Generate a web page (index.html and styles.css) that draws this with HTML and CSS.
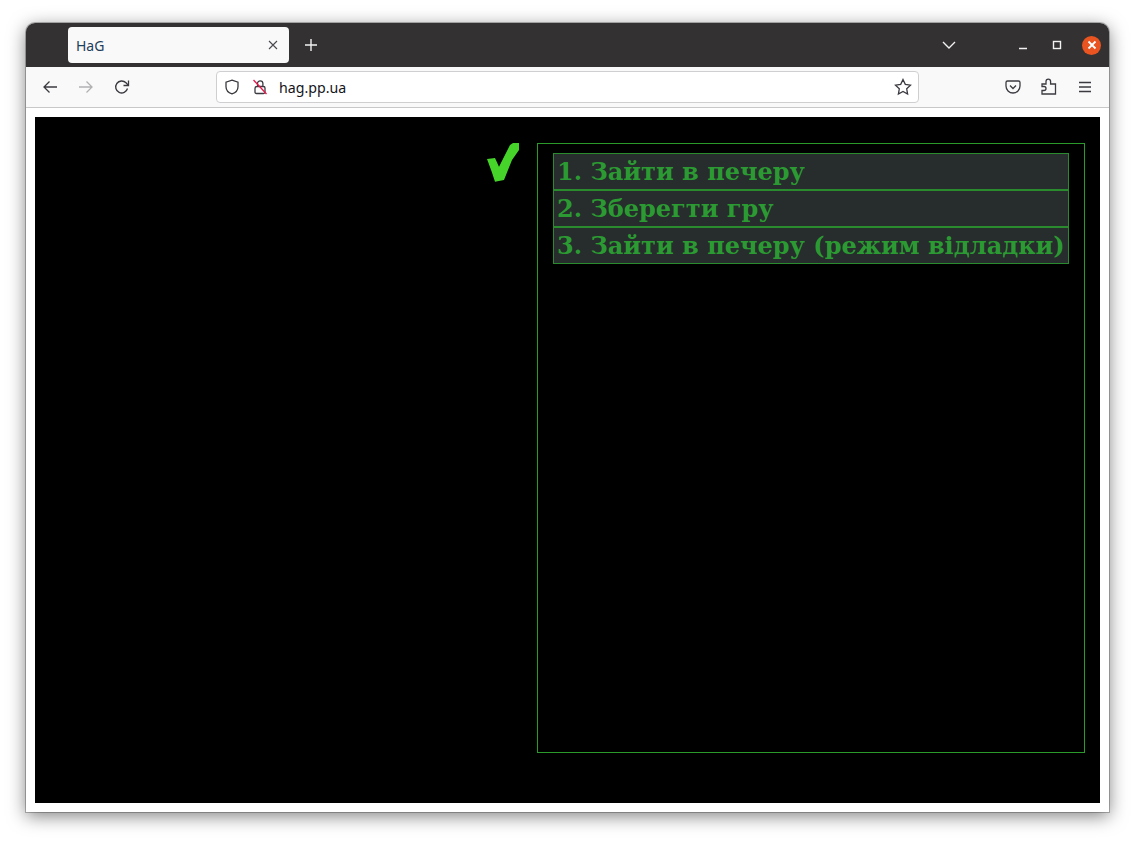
FILE: index.html
```html
<!DOCTYPE html>
<html lang="uk">
<head>
    <meta charset="UTF-8">
    <meta name="viewport" content="width=device-width, initial-scale=1.0">
    <title>HaG</title>
    <link rel="stylesheet" href="styles.css">
</head>
<body>
    <div class="window">
        <div class="titlebar">
            <div class="tab">
                <span class="tab-title">HaG</span>
                <svg class="tab-close" width="10" height="10" viewBox="0 0 10 10"><path d="M1 1l8 8M9 1l-8 8"/></svg>
            </div>
            <svg class="new-tab" width="14" height="14" viewBox="0 0 14 14"><path d="M7 1v12M1 7h12"/></svg>
            <svg class="tab-list" width="14" height="8" viewBox="0 0 14 8"><path d="M1 1l6 6 6-6"/></svg>
            <svg class="win-min" width="10" height="10" viewBox="0 0 10 10"><path d="M1 8.500h8"/></svg>
            <svg class="win-max" width="10" height="10" viewBox="0 0 10 10"><rect x="1.500" y="1.500" width="7" height="7"/></svg>
            <div class="win-close">
                <svg width="10" height="10" viewBox="0 0 10 10"><path d="M1.500 1.500l7 7M8.500 1.500l-7 7"/></svg>
            </div>
        </div>
        <div class="toolbar">
            <svg class="tool tool-back" width="16" height="16" viewBox="0 0 16 16"><path d="M15 8H2M7.500 2.500L2 8l5.500 5.500"/></svg>
            <svg class="tool tool-forward" width="16" height="16" viewBox="0 0 16 16"><path d="M1 8h13M8.500 2.500L14 8l-5.500 5.500"/></svg>
            <svg class="tool tool-reload" width="16" height="16" viewBox="0 0 16 16"><path d="M13.500 9.500A6 6 0 1 1 12 3.800L14 6"/><path d="M14.500 1.500V6.500H9.500"/></svg>
            <div class="urlbar">
                <svg class="shield" width="16" height="16" viewBox="0 0 16 16"><path d="M8 1.200l6 2v4.500c0 3.500-2.500 6-6 7.200-3.500-1.200-6-3.700-6-7.200V3.200z"/></svg>
                <svg class="lock" width="16" height="16" viewBox="0 0 16 16"><path class="lock-body" d="M5.500 7.500V4.500a2.700 2.700 0 0 1 5.400 0v3M3 9.500q0-2 2-2h6.500q1.500 0 1.500 1.500v4q0 1.500-1.500 1.500h-7q-1.500 0-1.500-1.500z"/><path class="lock-slash" d="M1.500 1l13 14"/></svg>
                <span class="url">hag.pp.ua</span>
                <svg class="star" width="18" height="18" viewBox="0 0 18 18"><path d="M9 1.500l2.300 4.900 5.200.7-3.800 3.700.9 5.300L9 13.500l-4.600 2.600.9-5.300L1.500 7.100l5.200-.7z"/></svg>
            </div>
            <svg class="tool tool-pocket" width="16" height="16" viewBox="0 0 16 16"><path d="M2.500 2h11A1.500 1.500 0 0 1 15 3.500V7a7 7 0 0 1-14 0V3.500A1.500 1.500 0 0 1 2.500 2z"/><path d="M5 6.500l3 3 3-3"/></svg>
            <svg class="tool tool-ext" width="16" height="18" viewBox="0 0 16 18"><path d="M1 6.500h4V4a2.300 2.300 0 0 1 4.600 0v2.500h4.900v10H1v-3.500h2a2 2 0 0 0 0-4H1z" transform="translate(0 -0.500)"/></svg>
            <svg class="tool tool-menu" width="16" height="16" viewBox="0 0 16 16"><path d="M2 3.500h12M2 8h12M2 12.500h12"/></svg>
        </div>
        <div class="content">
            <div class="stage">
                <svg class="check" width="33" height="41" viewBox="0 0 33 41"><path d="M0 17l8-1 4 8.700L23 3l3-2h6v7L25 18l-8 20-9 1.700-3.300-10z"/></svg>
                <div class="panel">
                    <div class="choice">1. Зайти в печеру</div>
                    <div class="choice">2. Зберегти гру</div>
                    <div class="choice">3. Зайти в печеру (режим відладки)</div>
                </div>
            </div>
        </div>
    </div>
</body>
</html>
```

FILE: styles.css
```css
html, body {
    height: 100%;
}
body {
    margin: 0;
    padding: 23px 26px 29px;
    box-sizing: border-box;
    background-color: #fff;
    font-family: 'Noto Sans', 'Open Sans', sans-serif;
    overflow: hidden;
}
svg {
    display: block;
    flex: none;
    fill: none;
}
.window {
    height: 789px;
    display: flex;
    flex-direction: column;
    border-radius: 9px 9px 0 0;
    overflow: hidden;
    box-shadow: 0 0 0 1px rgba(0, 0, 0, 0.25), 0 4px 18px rgba(0, 0, 0, 0.5);
}
.titlebar {
    height: 44px;
    flex: none;
    display: flex;
    align-items: center;
    box-sizing: border-box;
    padding-left: 42px;
    background-color: #333132;
}
.titlebar path, .titlebar rect {
    stroke: #f2f2f2;
    stroke-width: 1.4;
}
.tab {
    width: 221px;
    height: 36px;
    box-sizing: border-box;
    padding: 0 11px 0 8px;
    display: flex;
    align-items: center;
    justify-content: space-between;
    background-color: #f9f9f9;
    border-radius: 4px;
}
.tab-title {
    font-size: 14px;
    color: #1f3d5c;
}
.titlebar .tab-close path {
    stroke: #4a494e;
    stroke-width: 1.1;
}
.new-tab {
    margin-left: 15px;
}
.tab-list {
    margin-left: 624px;
}
.win-min {
    margin-left: 62px;
}
.win-max {
    margin-left: 24px;
}
.win-close {
    width: 19px;
    height: 19px;
    margin-left: 20px;
    border-radius: 50%;
    background-color: #e95420;
    display: flex;
    align-items: center;
    justify-content: center;
}
.titlebar .win-close path {
    stroke: #fff;
    stroke-width: 1.8;
}
.toolbar {
    height: 41px;
    flex: none;
    display: flex;
    align-items: center;
    box-sizing: border-box;
    padding: 0 0 1px 16px;
    background-color: #f9f9f9;
    border-bottom: 1px solid #c8c8c8;
}
.toolbar path {
    stroke: #3b3a40;
    stroke-width: 1.3;
}
.toolbar .tool-forward path {
    stroke: #b1b1b4;
}
.tool-forward {
    margin-left: 20px;
}
.tool-reload {
    margin-left: 20px;
}
.urlbar {
    width: 703px;
    height: 32px;
    margin-left: 86px;
    box-sizing: border-box;
    padding: 0 6px 0 7px;
    display: flex;
    align-items: center;
    background-color: #fff;
    border: 1px solid #cfcfd2;
    border-radius: 4px;
}
.lock {
    margin-left: 12px;
}
.toolbar .lock-slash {
    stroke: #e8174b;
}
.url {
    margin-left: 11px;
    padding-top: 1px;
    flex: 1;
    font-size: 14.2px;
    color: #15141a;
}
.tool-pocket {
    margin-left: 86px;
}
.tool-ext {
    margin-left: 20px;
}
.tool-menu {
    margin-left: 20px;
}
.content {
    flex: 1;
    display: flex;
    padding: 9px;
    background-color: #fff;
}
.stage {
    flex: 1;
    display: flex;
    align-items: flex-start;
    justify-content: flex-end;
    box-sizing: border-box;
    padding: 26px 15px 50px 0;
    background-color: #000;
}
.check {
    margin: -1px 17px 0 0;
}
.check path {
    fill: #46d42a;
}
.panel {
    width: 548px;
    height: 100%;
    box-sizing: border-box;
    padding: 9px 15px;
    border: 1px solid #2a9a2a;
}
.choice {
    height: 37px;
    box-sizing: border-box;
    padding-left: 3px;
    font-family: 'DejaVu Serif', serif;
    font-weight: bold;
    font-size: 24px;
    line-height: 36px;
    white-space: nowrap;
    color: #2b9a32;
    background-color: #272c2c;
    border: 1px solid #2a8a2e;
}
```
